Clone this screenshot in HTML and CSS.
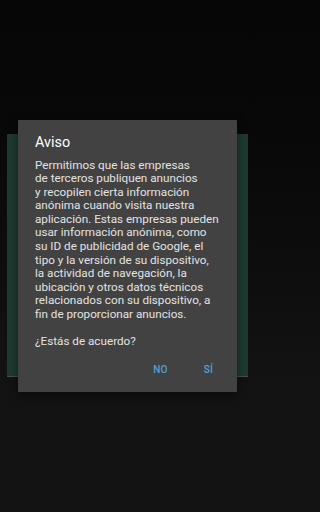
FILE: index.html
```html
<!DOCTYPE html>
<html lang="es">
<head>
<meta charset="utf-8">
<link rel="stylesheet" href="styles.css">
</head>
<body>
<div class="screen">
  <div class="backdrop-card"></div>
  <div class="dialog">
    <div class="dialog-title">Aviso</div>
    <div class="dialog-message">Permitimos que las empresas<br>de terceros publiquen anuncios<br>y recopilen cierta información<br>anónima cuando visita nuestra<br>aplicación. Estas empresas pueden<br>usar información anónima, como<br>su ID de publicidad de Google, el<br>tipo y la versión de su dispositivo,<br>la actividad de navegación, la<br>ubicación y otros datos técnicos<br>relacionados con su dispositivo, a<br>fin de proporcionar anuncios.<br><br>¿Estás de acuerdo?</div>
    <div class="dialog-actions">
      <span class="dialog-btn">NO</span>
      <span class="dialog-btn">SÍ</span>
    </div>
  </div>
</div>
</body>
</html>
```
FILE: styles.css
```css
html {
  background: linear-gradient(to bottom, #060606 0%, #080808 25%, #0e0e0e 55%, #131313 75%, #131313 100%);
  min-height: 100%;
}
html, body {
  margin: 0;
  padding: 0;
}
body {
  min-height: 512px;
  font-family: Roboto, "Noto Sans", sans-serif;
}
.screen {
  position: relative;
  width: 255px;
  height: 512px;
  overflow: hidden;
  background: linear-gradient(to bottom, #060606 0%, #080808 25%, #0e0e0e 55%, #131313 75%, #131313 100%);
  padding-top: 134px;
  box-sizing: border-box;
}
.backdrop-card {
  margin: 0 7px;
  height: 242px;
  background: #1e3a31;
  border-bottom: 1px solid #44524c;
}
.dialog {
  position: absolute;
  left: 18px;
  top: 120px;
  width: 219px;
  height: 272px;
  box-sizing: border-box;
  background: #424242;
  border-radius: 1px;
  box-shadow: 0 4px 10px rgba(0, 0, 0, 0.5);
  padding: 14px 0 0 17px;
  display: flex;
  flex-direction: column;
}
.dialog-title {
  font-size: 14.4px;
  line-height: 17px;
  color: #ffffff;
  white-space: nowrap;
}
.dialog-message {
  margin-top: 7.5px;
  font-size: 11.7px;
  line-height: 13.6px;
  color: #e2e2e2;
  white-space: nowrap;
}
.dialog-actions {
  margin-top: 8.5px;
  display: flex;
  justify-content: flex-end;
  padding-right: 6px;
  gap: 3px;
}
.dialog-btn {
  min-width: 45px;
  height: 25px;
  line-height: 25px;
  text-align: center;
  font-size: 10px;
  font-weight: 500;
  color: #4fa3d6;
  letter-spacing: 0.3px;
}
```
